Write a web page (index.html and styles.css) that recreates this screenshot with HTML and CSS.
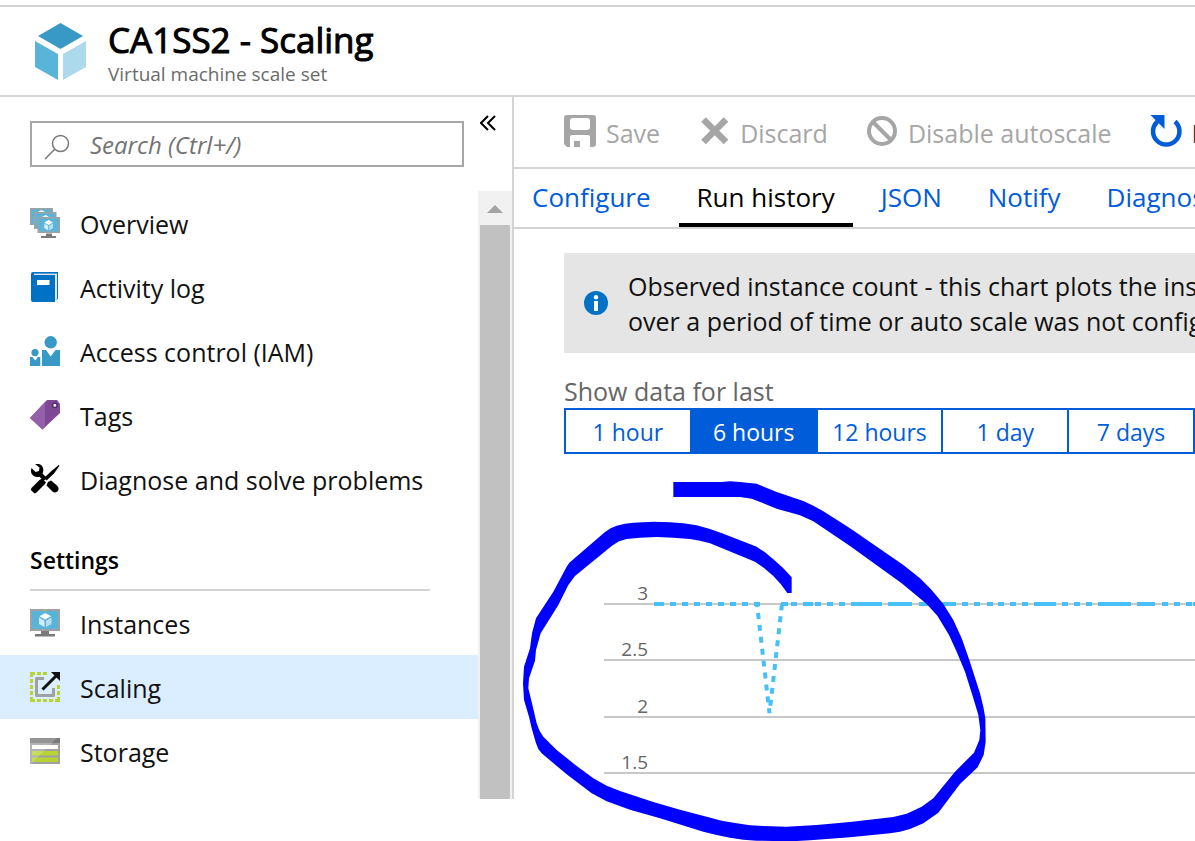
FILE: index.html
```html
<!DOCTYPE html>
<html lang="en">
<head>
<meta charset="utf-8">
<meta name="viewport" content="width=device-width, initial-scale=1">
<title>CA1SS2 - Scaling</title>
<link rel="stylesheet" href="styles.css">
</head>
<body>
<header class="blade-header">
  <svg class="blade-icon" viewBox="0 0 52 58" aria-hidden="true">
    <path fill="#3999c6" d="M25.500 0 48 13 25.500 26 3 13z"/>
    <path fill="#59b4d9" d="M0 18 23 31V57L0 44z"/>
    <path fill="#add9ed" d="M51 18 28 31V57L51 44z"/>
  </svg>
  <div>
    <h1 class="blade-title">CA1SS2 - Scaling</h1>
    <p class="blade-subtitle">Virtual machine scale set</p>
  </div>
</header>

<div class="workspace">
  <aside class="sidebar">
    <div class="search-row">
      <label class="search-box">
        <svg class="search-icon" viewBox="0 0 26 26" aria-hidden="true"><circle cx="16.500" cy="9.500" r="8" /><path d="M11 15 1 25"/></svg>
        <input class="search-input" type="text" placeholder="Search (Ctrl+/)" aria-label="Search">
      </label>
      <button class="collapse" type="button" aria-label="Collapse menu">
        <svg viewBox="0 0 16 16" aria-hidden="true"><path d="M8 1 1 8l7 7M15 1 8 8l7 7"/></svg>
      </button>
    </div>
    <div class="menu-area">
      <nav class="menu">
        <a class="menu-item" href="#overview">
          <svg class="menu-icon" viewBox="0 0 30 30" aria-hidden="true">
            <path fill="#a0a1a2" d="M0 0H23V17H0z"/><path fill="#59b4d9" d="M1.500 1.500H21.500V15.500H1.500z"/>
            <path fill="#fff" d="M8 4 11.500 2 15 4z"/>
            <path fill="#a0a1a2" d="M4 4H26.500V21H4z"/><path fill="#59b4d9" d="M5.500 5.500H25V19.500H5.500z"/>
            <path fill="#fff" d="M12 9 15.500 7 19 9z"/>
            <path fill="#a0a1a2" d="M7.500 9H30V25H7.500z"/><path fill="#59b4d9" d="M9 10.500H28.500V23.500H9z"/>
            <path fill="#fff" d="M18.700 12 23 14.400 18.700 17 14.200 14.400z"/><path fill="#d3ecf7" d="M14.200 15.400 18.200 17.800V22.500L14.200 20z"/><path fill="#b8e0f2" d="M23 15.400 19.200 17.800V22.500L23 20z"/>
            <path fill="#7a7a7a" d="M16 25.500H22V28H26V30H11V28H16z"/>
          </svg>
          <span>Overview</span>
        </a>
        <a class="menu-item" href="#activity">
          <svg class="menu-icon" viewBox="0 0 30 30" aria-hidden="true">
            <path fill="#0072c6" d="M3 0H28V27L26 28V2H3z"/>
            <path fill="#e5e5e5" d="M3 1.500H27V27L25 29V3H3z"/>
            <path fill="#0072c6" d="M1 2Q1 0 3 0H28V1.300H4V3H25V30H3Q1 30 1 28z"/>
            <path fill="#fff" d="M7 8H19.500V13H7z"/>
          </svg>
          <span>Activity log</span>
        </a>
        <a class="menu-item" href="#iam">
          <svg class="menu-icon" viewBox="0 0 30 30" aria-hidden="true">
            <g fill="#3999c6"><circle cx="20.700" cy="6.300" r="6.200"/><circle cx="5" cy="16.600" r="3.600"/>
            <path d="M12 14H16L20.700 20.500 25.500 14H30V30H12zM0 21H2.500L5.200 24.500 8 21H10.300V30H0z"/></g>
          </svg>
          <span>Access control (IAM)</span>
        </a>
        <a class="menu-item" href="#tags">
          <svg class="menu-icon" viewBox="0 0 30 30" aria-hidden="true">
            <path fill="#804998" d="M17 0H27L30 4V13L12.500 29.500 0 18z"/>
            <path fill="#9460a9" d="M15 2V27L12.500 29.500 0 18z"/>
            <circle cx="24.800" cy="5.200" r="2.300" fill="#fff" stroke="#55286c" stroke-width="1.500"/>
          </svg>
          <span>Tags</span>
        </a>
        <a class="menu-item" href="#diagnose">
          <svg class="menu-icon" viewBox="0 0 30 30" aria-hidden="true">
            <path d="M5 0Q12-1 13.300 5 13.500 8 12.500 9.500L17 14 13.500 17 9.500 12.700Q4 14 1.500 9.500 .5 7 1.500 4L5.500 8 9 7 9.500 3.500z"/>
            <path d="M18 18 21 16.500 27 21.500Q29.500 24 28 27 25.500 29.500 22.500 27.500L16.500 21.500z"/>
            <path d="M29 .8 29.300 2 24 9.500 16.500 16.500 14 14 21.500 7z"/>
            <path d="M12 14.500 16 18.500 14.500 20.500 6 29 4.500 29.500 .8 26 1.500 24 9.500 16z"/>
          </svg>
          <span>Diagnose and solve problems</span>
        </a>
        <h2 class="menu-heading">Settings</h2>
        <a class="menu-item" href="#instances">
          <svg class="menu-icon" viewBox="0 0 30 30" aria-hidden="true">
            <path fill="#a0a1a2" d="M0 1H30V23H0z"/><path fill="#59b4d9" d="M2 3H28V21H2z"/>
            <path fill="#b8d432" d="M14 1.500H16V2.500H14z"/>
            <path fill="#fff" d="M15.200 5 21 8.300 15.200 11.500 9.500 8.300z"/><path fill="#d3ecf7" d="M9 9.600 14.500 12.700V19L9 16z"/><path fill="#b8e0f2" d="M21.500 9.600 16 12.700V19L21.500 16z"/>
            <path fill="#7a7a7a" d="M11 23H19V26H25V28.500H5V26H11z"/>
          </svg>
          <span>Instances</span>
        </a>
        <a class="menu-item menu-item-active" href="#scaling" aria-current="page">
          <svg class="menu-icon" viewBox="0 0 30 30" aria-hidden="true">
            <path fill="none" stroke="#b8d432" stroke-width="3" d="M0 1.500H5M7 1.500h4M13 1.500h4M1.500 0V5M1.500 7v4M1.500 13v4M1.500 19v4M1.500 25v5M0 28.500H5M7 28.500h4M13 28.500h4M19 28.500h4M25 28.500h5M28.500 30V25M28.500 23V19M28.500 17V13"/>
            <path fill="none" stroke="#a0a1a2" stroke-width="3" stroke-linejoin="round" d="M14 6.500H6.500V23.500H23.500V16"/>
            <path fill="none" stroke="#111" stroke-width="3" d="M12.500 17.500 26 4"/><path fill="#111" d="M21 0H30V9z"/>
          </svg>
          <span>Scaling</span>
        </a>
        <a class="menu-item" href="#storage">
          <svg class="menu-icon" viewBox="0 0 30 30" aria-hidden="true">
            <path fill="#a0a1a2" d="M0 2H30V28H0z"/><path fill="#7a7a7a" d="M0 2H30V7H0z"/>
            <path fill="#fff" d="M2 9H28V13H2z"/><path fill="#b8d432" d="M2 15H28V19.500H2zM2 21.500H28V26H2z"/>
            <path fill="#fff" fill-opacity=".2" d="M0 2H27L1 28H0z"/>
          </svg>
          <span>Storage</span>
        </a>
      </nav>
      <div class="scrollbar" aria-hidden="true">
        <svg class="scroll-arrow" viewBox="0 0 16 8"><path d="M0 8 8 0l8 8z"/></svg>
        <div class="scroll-thumb"></div>
      </div>
    </div>
  </aside>

  <main class="main">
    <div class="toolbar">
      <button class="tool" type="button" disabled>
        <svg class="tool-icon" viewBox="0 0 32 32" aria-hidden="true"><path fill="currentColor" fill-rule="evenodd" d="M3 0H29Q32 0 32 3V29Q32 32 29 32H26V22Q26 20 24 20H8Q6 20 6 22V32H3L0 29V3Q0 0 3 0zM9 3Q6 3 6 6V12Q6 15 9 15H23Q26 15 26 12V6Q26 3 23 3zM10 26H16V32H10z"/></svg>
        <span>Save</span>
      </button>
      <button class="tool" type="button" disabled>
        <svg class="tool-icon" viewBox="0 0 32 32" aria-hidden="true"><path fill="none" stroke="currentColor" stroke-width="6.500" d="M5.500 4.500 28 27M28 4.500 5.500 27"/></svg>
        <span>Discard</span>
      </button>
      <button class="tool" type="button" disabled>
        <svg class="tool-icon" viewBox="0 0 32 32" aria-hidden="true"><g fill="none" stroke="currentColor" stroke-width="4"><circle cx="16" cy="16" r="13"/><path d="M7 7 25 25"/></g></svg>
        <span>Disable autoscale</span>
      </button>
      <button class="tool tool-enabled" type="button">
        <svg class="tool-icon" viewBox="0 0 32 32" aria-hidden="true"><path fill="none" stroke="#015cda" stroke-width="4.500" d="M25 6.500A13.200 13.200 0 1 1 7.500 6.500"/><path fill="#015cda" d="M.5 0H14.500V14z"/></svg>
        <span>Refresh</span>
      </button>
    </div>
    <nav class="tabs">
      <a class="tab" href="#configure">Configure</a>
      <a class="tab tab-active" href="#history" aria-current="page">Run history</a>
      <a class="tab" href="#json">JSON</a>
      <a class="tab" href="#notify">Notify</a>
      <a class="tab" href="#diagnostics">Diagnostics</a>
    </nav>
    <div class="panel">
      <div class="info">
        <svg class="info-icon" viewBox="0 0 24 24" aria-hidden="true"><circle cx="12" cy="12" r="12" fill="#0072c6"/><circle cx="12" cy="6.300" r="2.200" fill="#fff"/><path fill="#fff" d="M10 10H14V20H10z"/></svg>
        <p class="info-text">Observed instance count - this chart plots the instance<br>over a period of time or auto scale was not configured</p>
      </div>
      <p class="range-label" id="range-label">Show data for last</p>
      <div class="range" role="group" aria-labelledby="range-label">
        <button class="range-option" type="button">1 hour</button>
        <button class="range-option range-selected" type="button" aria-pressed="true">6 hours</button>
        <button class="range-option" type="button">12 hours</button>
        <button class="range-option" type="button">1 day</button>
        <button class="range-option" type="button">7 days</button>
      </div>
    </div>
    <figure class="chart">
      <svg class="chart-plot" role="img" aria-label="Observed instance count">
        <g class="grid-line"><line x1="90" x2="100%" y1="134" y2="134"/><line x1="90" x2="100%" y1="190" y2="190"/><line x1="90" x2="100%" y1="247" y2="247"/><line x1="90" x2="100%" y1="303" y2="303"/></g>
        <g class="axis-label"><text x="134" y="130">3</text><text x="134" y="186">2.5</text><text x="134" y="243">2</text><text x="134" y="299">1.5</text></g>
        <path class="series" d="M140 134H150M156 134h6M168 134h6M180 134h6M192 134h6M204 134h6M216 134h6M228 134h6M240 134h6M267 134H274M277 134h6M289 134H299M301 134h6M313 134h6M325 134h6M337 134H368M374 134H398M405 134H442M448 134h6M460 134h6M473 134h6M484 134h6M496 134h6M508 134h6M520 134H542M548 134h6M560 134h6M572 134h6M584 134H617M623 134H641M648 134h6M660 134h6M672 134h6M679 134H690"/>
        <path class="series" stroke-dasharray="6 6" stroke-dashoffset="3" d="M243 134 255.500 243 268 134"/>
      </svg>
      <svg class="ink" viewBox="12 0 2043 1113" aria-hidden="true">
        <path d="M490 36 635 36 660 34 690 36 740 41 800 66 880 93 910 107 940 124 1020 175 1180 285 1230 325 1265 360 1300 402 1330 450 1355 505 1378 570 1410 670 1420 710 1426 745 1427 815 1421 855 1403 892 1350 942 1285 1028 1240 1060 1200 1077 1170 1085 1140 1090 1020 1102 900 1111 840 1114 740 1112 700 1109 660 1103 620 1095 580 1085 450 1045 360 1019 290 994 245 970 170 913 95 850 85 837 78 820 65 775 57 740 42 690 39 640 42 590 60 535 66 490 78 445 130 365 170 290 178 278 285 186 302 175 320 167 345 161 370 158 430 155 480 157 520 160 560 166 600 177 640 191 740 230 765 247 790 268 820 295 845 322 845 369 832 369 812 342 790 318 762 294 735 275 600 220 570 212 540 207 490 203 440 201 390 203 350 207 327 214 305 228 195 318 175 345 145 405 92 490 78 540 75 572 57 625 55 655 66 700 80 760 89 783 100 800 140 840 195 884 250 925 290 947 330 963 430 996 510 1019 590 1040 635 1052 680 1060 720 1066 760 1068 830 1070 920 1065 1020 1056 1150 1041 1190 1031 1235 1010 1270 985 1335 905 1392 848 1408 810 1411 780 1405 735 1390 685 1365 605 1340 545 1317 495 1282 437 1250 402 1175 340 1020 228 910 154 870 136 800 116 725 86 690 81 490 81z"/>
      </svg>
    </figure>
  </main>
</div>
</body>
</html>
```
FILE: styles.css
```css
* { box-sizing: border-box; }

body {
  margin: 0;
  padding-top: 5px;
  overflow: hidden;
  background: #fff;
  color: #111;
  font-family: "Open Sans", "Noto Sans", sans-serif;
  font-size: 25px;
  line-height: 35px;
}

h1, h2, p, figure { margin: 0; }
a { color: inherit; text-decoration: none; }
button { margin: 0; padding: 0; border: 0; background: none; color: inherit; font: inherit; }

.blade-header {
  display: flex;
  align-items: flex-start;
  gap: 21px;
  height: 92px;
  padding: 9px 35px;
  border-top: 2px solid #d4d4d4;
  border-bottom: 2px solid #d4d4d4;
}
.blade-icon { width: 52px; height: 58px; margin-top: 7px; }
.blade-title { color: #000; font-size: 35px; font-weight: 400; line-height: 48px; -webkit-text-stroke: 1px #000; }
.blade-subtitle { color: #6b6b6b; font-size: 19px; line-height: 20px; }

.workspace { display: flex; align-items: flex-start; }

.sidebar { flex: 0 0 514px; border-right: 2px solid #d4d4d4; }
.search-row { display: flex; align-items: flex-start; gap: 16px; height: 94px; padding: 24px 16px 0 30px; }
.search-box { display: flex; flex: 1; align-items: center; gap: 20px; height: 46px; padding: 0 12px; border: 2px solid #a6a6a6; }
.search-icon { flex: none; width: 26px; height: 26px; margin-top: 5px; fill: none; stroke: #777; stroke-width: 1.500; }
.search-input { flex: 1; min-width: 0; height: 40px; padding: 0; border: 0; outline: 0; background: none; font: inherit; font-size: 24px; }
.search-input::placeholder { color: #737373; font-style: italic; opacity: 1; }
.collapse { display: flex; width: 16px; height: 4px; }
.collapse svg { flex: none; width: 16px; height: 16px; margin-top: -6px; fill: none; stroke: #000; stroke-width: 2; }

.menu-area { display: flex; }
.menu { flex: 1; padding-bottom: 16px; }
.menu-item { display: flex; align-items: center; gap: 20px; height: 64px; padding-left: 30px; }
.menu-item span { padding-top: 2px; }
.menu-icon { flex: none; width: 30px; height: 30px; }
.menu-item-active { background: #dbeeff; }
.menu-heading { height: 80px; margin: 0 48px 0 30px; padding-top: 32px; border-bottom: 2px solid #d4d4d4; color: #000; font-size: 23px; font-weight: 600; }

.scrollbar { display: flex; flex-direction: column; align-items: center; width: 34px; background: #f1f1f1; }
.scroll-arrow { width: 16px; height: 8px; margin: 14px 0 12px; fill: #a3a3a3; }
.scroll-thumb { flex: 1; width: 30px; background: #c1c1c1; }

.main { flex: 1; min-width: 0; overflow: hidden; }
.toolbar { display: flex; align-items: center; gap: 38px; height: 72px; padding: 2px 0 0 50px; border-bottom: 2px solid #d4d4d4; white-space: nowrap; }
.tool { display: flex; flex: none; align-items: center; gap: 10px; color: #a6a6a6; }
.tool-enabled { color: #333; }
.tool-icon { width: 32px; height: 32px; margin-bottom: 4px; }

.tabs { display: flex; gap: 10px; height: 60px; border-bottom: 2px solid #d4d4d4; white-space: nowrap; }
.tab { flex: none; padding: 11px 18px 0; color: #015cda; font-size: 26px; }
.tab-active { border-bottom: 4px solid #000; color: #000; }

.panel { padding: 24px 0 16px 50px; }
.info { display: flex; align-items: center; gap: 20px; height: 100px; padding: 0 20px; background: #e5e5e5; white-space: nowrap; }
.info-icon { flex: none; width: 24px; height: 24px; }
.info-text { padding-top: 2px; }
.range-label { margin-top: 22px; color: #666; line-height: 33px; }
.range { display: flex; max-width: 640px; height: 46px; }
.range-option { flex: 1; padding-top: 2px; border: 2px solid #015cda; color: #015cda; font-size: 23px; }
.range-option + .range-option { margin-left: -2px; }
.range-selected { background: #015cda; color: #fff; }

.chart { position: relative; height: 371px; }
.chart-plot { display: block; width: 100%; height: 100%; }
.grid-line { stroke: #c8c8c8; stroke-width: 2; }
.axis-label { fill: #666; font-size: 19px; text-anchor: end; }
.series { fill: none; stroke: #47bff7; stroke-width: 4; }
.ink { position: absolute; top: 0; left: 0; width: 681px; height: 371px; fill: #00f; pointer-events: none; }
```
